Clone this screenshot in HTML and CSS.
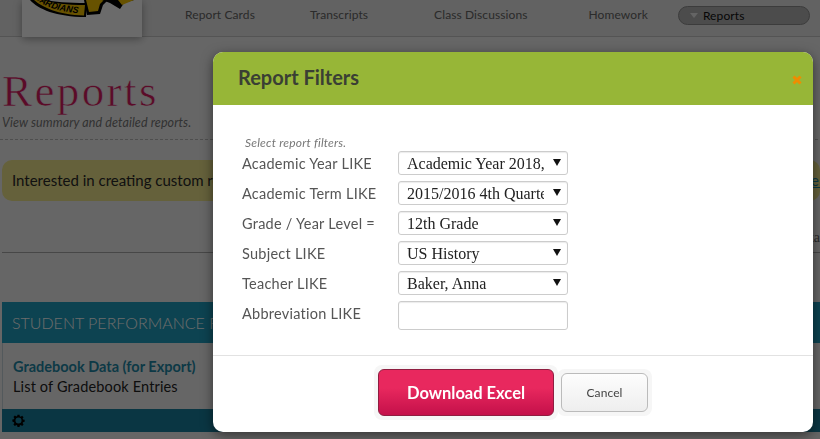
FILE: index.html
```html
<!DOCTYPE html>
<html lang="en">
<head>
<meta charset="utf-8">
<title>Reports</title>
<link rel="stylesheet" href="styles.css">
</head>
<body>
<div class="page">
  <header class="topbar">
    <div class="logo-card">
      <svg class="logo" viewBox="0 0 120 18" width="120" height="18" aria-hidden="true">
        <path d="M8 0 C16 9 34 17 64 17 L65 3 C45 3 32 2 24 0 Z" fill="#000"/>
        <path d="M12 0 C20 7 36 15 62 15.500 L63 5 C45 5 30 3 21 0 Z" fill="#f5c400"/>
        <path id="arc" d="M12 -2 C22 7 38 12 63 14" fill="none"/>
        <text class="logo-text"><textPath href="#arc">UARDIANS</textPath></text>
        <path d="M65 15 L78 14 L81 5 L86 0 L62 0 Z" fill="#000"/>
        <path d="M67 12 L76 11 L78 4 L82 0 L64 0 Z" fill="#f5c400"/>
        <path d="M80 0 L88 3 L98 9 L102 3 L112 0 Z" fill="#000"/>
        <path d="M96 0 L100 5 L112 0 Z" fill="#f5c400"/>
      </svg>
    </div>
    <nav class="nav">
      <a class="nav-item nav-cards">Report Cards</a>
      <a class="nav-item nav-trans">Transcripts</a>
      <a class="nav-item nav-disc">Class Discussions</a>
      <a class="nav-item nav-home">Homework</a>
      <a class="nav-active"><span class="caret"></span>Reports</a>
    </nav>
  </header>

  <main class="content">
    <h1 class="title">Reports</h1>
    <p class="subtitle">View summary and detailed reports.</p>
    <hr class="dash">
    <div class="notice"><span class="notice-text">Interested in creating custom reports for your school? Let us know what you would like to see here!</span><a class="notice-link">e!</a></div>
    <div class="tabs-row"><span class="tab-text">Data</span></div>
    <section class="panel">
      <h2 class="panel-head">STUDENT PERFORMANCE REPORTS</h2>
      <div class="panel-body">
        <a class="report-link">Gradebook Data (for Export)</a>
        <p class="report-desc">List of Gradebook Entries</p>
      </div>
      <div class="panel-foot">
        <svg class="gear" viewBox="-1 -1 18 18" width="13" height="13" aria-hidden="true">
          <path fill-rule="evenodd" d="M6.600 0h2.800l.4 2.200 1.300.6 1.900-1.300 2 2-1.300 1.900.6 1.300 2.200.4v2.800l-2.200.4-.6 1.300 1.300 1.900-2 2-1.900-1.300-1.300.6-.4 2.200H6.600l-.4-2.200-1.300-.6-1.900 1.300-2-2 1.300-1.900-.6-1.300L-.5 9.400V6.600l2.200-.4.6-1.300L1 3l2-2 1.900 1.300 1.300-.6zM8 3.800a4.200 4.200 0 1 0 0 8.400 4.200 4.200 0 0 0 0-8.400z" fill="#000"/>
        </svg>
      </div>
    </section>
  </main>
</div>

<div class="backdrop"></div>

<div class="modal">
  <div class="modal-head">
    <h2 class="modal-title">Report Filters</h2>
    <svg class="close" viewBox="0 0 10 10" width="10" height="10" aria-hidden="true">
      <path d="M1.500 1.500l7 7M8.500 1.500l-7 7" stroke="#f08c00" stroke-width="3" fill="none"/>
    </svg>
  </div>
  <div class="modal-body">
    <p class="hint">Select report filters.</p>
    <form class="filters">
      <label class="filter-label">Academic Year LIKE</label>
      <div class="fake-select"><span class="val">Academic Year 2018, 2019</span><span class="arrow"></span></div>
      <label class="filter-label">Academic Term LIKE</label>
      <div class="fake-select"><span class="val">2015/2016 4th Quarter</span><span class="arrow"></span></div>
      <label class="filter-label">Grade / Year Level =</label>
      <div class="fake-select"><span class="val">12th Grade</span><span class="arrow"></span></div>
      <label class="filter-label">Subject LIKE</label>
      <div class="fake-select"><span class="val">US History</span><span class="arrow"></span></div>
      <label class="filter-label">Teacher LIKE</label>
      <div class="fake-select"><span class="val">Baker, Anna</span><span class="arrow"></span></div>
      <label class="filter-label">Abbreviation LIKE</label>
      <div class="fake-input"></div>
    </form>
  </div>
  <div class="modal-foot">
    <span class="btn-halo"><button class="btn-primary" type="button">Download Excel</button></span>
    <span class="btn-halo btn-halo-cancel"><button class="btn-cancel" type="button">Cancel</button></span>
  </div>
</div>
</body>
</html>
```
FILE: styles.css
```css
* { box-sizing: border-box; }
html, body { margin: 0; height: 100%; overflow: hidden; }
body {
  background: #f4f4f4;
  font-family: "Lato", "Open Sans", sans-serif;
  color: #111;
}
.page { width: 820px; height: 439px; overflow: hidden; }

.backdrop { position: fixed; inset: 0; background: rgba(0,0,0,.58); }

.topbar {
  height: 37px;
  background: #e9e9e9;
  border-bottom: 1px solid #c8c8c8;
  display: flex;
}
.logo-card {
  margin-left: 22px;
  width: 120px;
  height: 37px;
  background: #fff;
  box-shadow: 0 2px 8px rgba(0,0,0,.35);
  flex: none;
}
.logo { display: block; }
.logo-text { font: italic 700 9px "Liberation Sans", sans-serif; fill: #000; }
.nav { display: flex; align-items: flex-start; font-size: 12px; letter-spacing: .1px; color: #666; flex: 1; }
.nav-item { margin-top: 7px; line-height: 15px; white-space: nowrap; }
.nav-cards { margin-left: 43px; }
.nav-trans { margin-left: 55px; }
.nav-disc { margin-left: 66px; }
.nav-home { margin-left: 61px; }
.nav-active {
  margin: 6px 0 0 30px;
  width: 132px;
  height: 19px;
  background: #b5b5b5;
  border: 1px solid #8f8f8f;
  border-radius: 10px;
  display: flex;
  align-items: center;
  color: #111;
  padding-left: 11px;
  line-height: 15px;
}
.caret {
  width: 0; height: 0;
  border-left: 4px solid transparent;
  border-right: 4px solid transparent;
  border-top: 5px solid #eee;
  margin-right: 5px;
}

.content { padding: 0 2px; }
.title {
  margin: 29px 0 0;
  font: 400 45px/50px "Liberation Serif", serif;
  color: #d81b60;
  -webkit-text-stroke: .6px #f4f4f4;
  letter-spacing: 2.4px;
}
.subtitle {
  margin: 0;
  font: italic 12.5px/14px "Lato", sans-serif;
  color: #777;
  letter-spacing: .1px;
}
.dash { border: 0; border-top: 1px dashed #bbb; margin: 9px 0 0 -2px; }
.notice {
  margin: 20px -2px 0 0;
  height: 41px;
  border-radius: 10px;
  background: #f0e68c;
  display: flex;
  align-items: center;
  padding: 0 0 2px 10px;
  font-size: 15px;
  white-space: nowrap;
  color: #2a2a2a;
}
.notice-text { flex: 1; overflow: hidden; }
.notice-link { color: #1a8aa8; text-decoration: underline; margin-right: -3px; }
.tabs-row {
  height: 33px;
  margin: 19px -2px 0 0;
  border-bottom: 1px solid #aaa;
  text-align: right;
  font: 14px/36px "Liberation Serif", serif;
  color: #666;
  overflow: hidden;
}
.tab-text { display: inline-block; width: 8px; overflow: hidden; vertical-align: top; direction: rtl; }
.panel { margin-top: 49px; margin-right: -2px; }
.panel-head {
  margin: 0;
  height: 41px;
  background: #1f9fc0;
  color: #fff;
  font: 300 16px/41px "Lato", sans-serif;
  padding-left: 10px;
  white-space: nowrap;
}
.panel-body { height: 66px; background: #f4f4f4; border-left: 1px solid #c5d5dc; padding: 14px 0 0 10px; }
.report-link { display: block; font-weight: 700; font-size: 14.5px; line-height: 20px; color: #1f89a8; }
.report-desc { margin: 0; font-size: 14.5px; letter-spacing: .15px; line-height: 20px; color: #222; }
.panel-foot { height: 23px; background: #18809f; padding: 5px 0 0 10px; }
.gear { display: block; }

.modal {
  position: absolute;
  left: 213px;
  top: 52px;
  width: 600px;
  height: 380px;
  background: #fff;
  border-radius: 10px;
  box-shadow: 0 3px 12px rgba(0,0,0,.5);
  display: flex;
  flex-direction: column;
  overflow: hidden;
}
.modal-head {
  height: 53px;
  background: #97b637;
  display: flex;
  align-items: center;
  justify-content: space-between;
  padding: 0 11px 0 25px;
  flex: none;
}
.modal-title { margin: 0 0 3px; font: 700 20px/24px "Lato", sans-serif; color: #3a3f34; }
.close { margin-top: 2px; }
.modal-body { height: 251px; padding: 32px 0 0 29px; border-bottom: 1px solid #e2e2e2; flex: none; }
.hint { margin: 0 0 0 3px; font: italic 12px/12px "Lato", sans-serif; letter-spacing: .2px; color: #777; }
.filters {
  display: grid;
  grid-template-columns: 156px 170px;
  grid-auto-rows: 24px;
  row-gap: 6px;
  margin-top: 2px;
}
.filter-label { font-size: 14.5px; letter-spacing: .25px; line-height: 26px; color: #555; white-space: nowrap; }
.fake-select, .fake-input {
  border: 1px solid #ccc;
  border-radius: 3px;
  background: #fff;
  box-shadow: inset 0 1px 1px rgba(0,0,0,.08);
  display: flex;
  align-items: center;
  font: 16px/22px "Liberation Serif", serif;
  color: #222;
  padding: 1px 0 0 8px;
}
.fake-input { height: 29px; }
.val { width: 137px; flex: none; overflow: hidden; white-space: nowrap; }
.arrow {
  flex: none;
  width: 0; height: 0;
  margin: -2px 0 0 9px;
  border-left: 4px solid transparent;
  border-right: 4px solid transparent;
  border-top: 7px solid #111;
}
.modal-foot {
  flex: 1;
  display: flex;
  align-items: flex-start;
  padding: 9px 0 0 161px;
}
.btn-halo { background: #f6f6f6; border-radius: 8px; padding: 4px; display: block; }
.btn-halo-cancel { margin: 4px 0 0 -1px; padding: 4px; }
.btn-primary {
  display: block;
  width: 176px;
  height: 47px;
  border: 1px solid #8f1d40;
  border-radius: 6px;
  background: linear-gradient(#e8285e 40%, #c4104a);
  color: #fff;
  font: 700 16.5px "Lato", sans-serif;
  padding: 0;
}
.btn-cancel {
  display: block;
  width: 87px;
  height: 39px;
  border: 1px solid #bbb;
  border-radius: 6px;
  background: linear-gradient(#fdfdfd, #eee);
  color: #444;
  font: 12px "Lato", sans-serif;
  letter-spacing: .1px;
  padding: 0;
}
```
